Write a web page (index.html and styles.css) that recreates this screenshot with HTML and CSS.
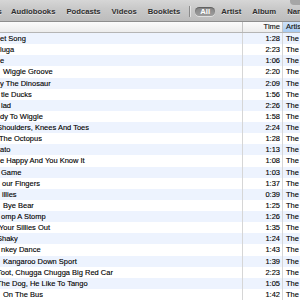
FILE: index.html
```html
<!DOCTYPE html>
<html>
<head>
<meta charset="utf-8">
<link rel="stylesheet" href="styles.css">
</head>
<body>
<div class="toolbar">
  <div class="tabs">
    <span class="tab t-prev">TV Shows</span>
    <span class="tab t-audio">Audiobooks</span>
    <span class="tab t-pod">Podcasts</span>
    <span class="tab t-vid">Videos</span>
    <span class="tab t-book">Booklets</span>
    <span class="sep"></span>
    <span class="pill">All</span>
    <span class="tab t-artist">Artist</span>
    <span class="tab t-album">Album</span>
    <span class="tab t-name">Name</span>
  </div>
  <div class="corner"></div>
</div>
<div class="header">
  <div class="c-name"></div>
  <div class="c-time">Time</div>
  <div class="c-artist sorted">Artist</div>
</div>
<div class="list">
  <div class="row"><div class="c-name">et Song</div><div class="c-time">1:28</div><div class="c-artist">The Wiggles</div></div>
  <div class="row"><div class="c-name">luga</div><div class="c-time">2:23</div><div class="c-artist">The Wiggles</div></div>
  <div class="row"><div class="c-name">e</div><div class="c-time">1:06</div><div class="c-artist">The Wiggles</div></div>
  <div class="row"><div class="c-name"><span class="o3">Wiggle Groove</span></div><div class="c-time">2:20</div><div class="c-artist">The Wiggles</div></div>
  <div class="row"><div class="c-name">y The Dinosaur</div><div class="c-time">2:09</div><div class="c-artist">The Wiggles</div></div>
  <div class="row"><div class="c-name"><span class="o1">tle Ducks</span></div><div class="c-time">1:56</div><div class="c-artist">The Wiggles</div></div>
  <div class="row"><div class="c-name"><span class="o1">lad</span></div><div class="c-time">2:26</div><div class="c-artist">The Wiggles</div></div>
  <div class="row"><div class="c-name">dy To Wiggle</div><div class="c-time">1:58</div><div class="c-artist">The Wiggles</div></div>
  <div class="row"><div class="c-name"><span class="cut3">Shoulders, Knees And Toes</span></div><div class="c-time">2:24</div><div class="c-artist">The Wiggles</div></div>
  <div class="row"><div class="c-name"><span class="cut1">The Octopus</span></div><div class="c-time">1:28</div><div class="c-artist">The Wiggles</div></div>
  <div class="row"><div class="c-name">ato</div><div class="c-time">1:13</div><div class="c-artist">The Wiggles</div></div>
  <div class="row"><div class="c-name">e Happy And You Know It</div><div class="c-time">1:08</div><div class="c-artist">The Wiggles</div></div>
  <div class="row"><div class="c-name"><span class="o1">Game</span></div><div class="c-time">1:03</div><div class="c-artist">The Wiggles</div></div>
  <div class="row"><div class="c-name"><span class="o2">our Fingers</span></div><div class="c-time">1:37</div><div class="c-artist">The Wiggles</div></div>
  <div class="row"><div class="c-name"><span class="o2">illies</span></div><div class="c-time">0:39</div><div class="c-artist">The Wiggles</div></div>
  <div class="row"><div class="c-name"><span class="o3">Bye Bear</span></div><div class="c-time">1:25</div><div class="c-artist">The Wiggles</div></div>
  <div class="row"><div class="c-name"><span class="o1">omp A Stomp</span></div><div class="c-time">1:26</div><div class="c-artist">The Wiggles</div></div>
  <div class="row"><div class="c-name"><span class="cut1">Your Sillies Out</span></div><div class="c-time">1:35</div><div class="c-artist">The Wiggles</div></div>
  <div class="row"><div class="c-name"><span class="cut3">Shaky</span></div><div class="c-time">1:24</div><div class="c-artist">The Wiggles</div></div>
  <div class="row"><div class="c-name"><span class="o1">nkey Dance</span></div><div class="c-time">1:43</div><div class="c-artist">The Wiggles</div></div>
  <div class="row"><div class="c-name"><span class="o3">Kangaroo Down Sport</span></div><div class="c-time">1:39</div><div class="c-artist">The Wiggles</div></div>
  <div class="row"><div class="c-name"><span class="cut3">Toot, Chugga Chugga Big Red Car</span></div><div class="c-time">2:23</div><div class="c-artist">The Wiggles</div></div>
  <div class="row"><div class="c-name"><span class="cut3">The Dog, He Like To Tango</span></div><div class="c-time">1:05</div><div class="c-artist">The Wiggles</div></div>
  <div class="row"><div class="c-name"><span class="o3">On The Bus</span></div><div class="c-time">1:42</div><div class="c-artist">The Wiggles</div></div>
</div>
</body>
</html>
```

FILE: styles.css
```css
html, body {
  margin: 0;
  padding: 0;
  width: 300px;
  height: 300px;
  overflow: hidden;
  background: #fff;
  font-family: "Liberation Sans", Arial, sans-serif;
}

.toolbar {
  position: relative;
  height: 21px;
  border-bottom: 1px solid #8e8e8e;
  background: linear-gradient(#d6d6d6, #c9c9c9 40%, #bcbcbc);
  overflow: hidden;
}

.tabs {
  display: flex;
  align-items: center;
  height: 21px;
  padding-top: 1px;
  box-sizing: border-box;
  margin-left: -35px;
  gap: 11px;
  white-space: nowrap;
}

.tab {
  font-size: 7.7px;
  font-weight: bold;
  color: #2e2e2e;
  text-shadow: 0 1px 0 rgba(255, 255, 255, 0.55);
  flex: none;
}

.t-prev { width: 35px; text-align: right; }

.sep {
  flex: none;
  width: 1px;
  height: 11px;
  background: #8a8a8a;
  box-shadow: 1px 0 0 rgba(255, 255, 255, 0.5);
  margin-left: -2px;
  margin-right: -6px;
}

.pill {
  flex: none;
  width: 20px;
  height: 9px;
  line-height: 9px;
  border-radius: 5px;
  background: linear-gradient(#858585, #9c9c9c);
  box-shadow: inset 0 1px 1px rgba(0, 0, 0, 0.3), 0 1px 0 rgba(255, 255, 255, 0.5);
  color: #fff;
  font-size: 7.7px;
  font-weight: bold;
  text-align: center;
  margin-right: -5px;
}

.corner {
  position: absolute;
  right: -6px;
  top: -6px;
  width: 16px;
  height: 11px;
  border-radius: 4px;
  background: #a6a6a6;
}

.header {
  display: flex;
  height: 10px;
  border-bottom: 1px solid #b5b5b5;
  background: linear-gradient(#fbfbfb, #ececec);
  font-size: 7.5px;
  line-height: 10px;
  color: #111;
  -webkit-text-stroke: 0.12px #111;
}

.list {
  height: 267px;
  border-bottom: 1px solid #b9b9b9;
  overflow: hidden;
}

.row {
  display: flex;
  height: 11.125px;
  line-height: 11.125px;
  font-size: 7.5px;
  color: #000;
  white-space: nowrap;
  -webkit-text-stroke: 0.12px #000;
}

.row:nth-child(odd) {
  background: #edf3fe;
}

.c-name {
  flex: none;
  width: 242px;
  border-right: 1px solid #d6d6d6;
  overflow: hidden;
}

.c-time {
  flex: none;
  width: 37px;
  padding-right: 2px;
  text-align: right;
  border-right: 1px solid #d6d6d6;
  overflow: hidden;
}

.c-artist {
  flex: 1;
  padding-left: 3px;
  overflow: hidden;
}

.header .c-name,
.header .c-time {
  border-right-color: #c4c4c4;
}

.sorted {
  background: linear-gradient(#cfe3fa, #a8cbf1);
}

.o1 { margin-left: 1px; }
.o2 { margin-left: 2px; }
.o3 { margin-left: 3px; }
.cut1 { margin-left: -1px; }
.cut3 { margin-left: -3px; }

.c-name span { display: inline-block; }
```
